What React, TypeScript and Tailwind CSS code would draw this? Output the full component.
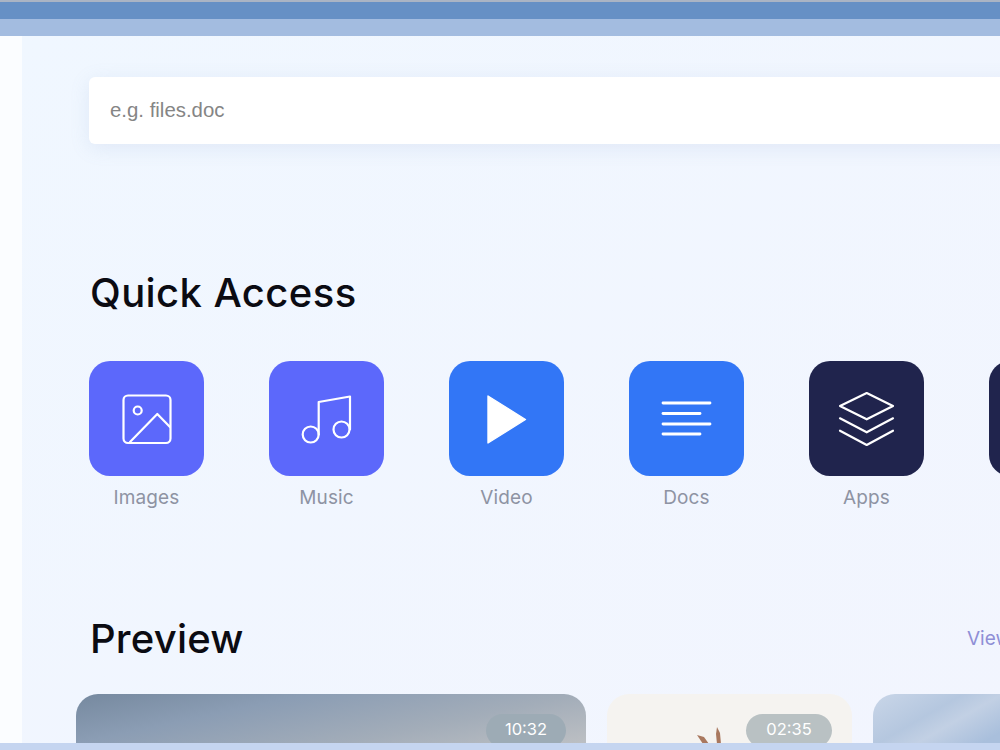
const tileIcons = {
  image: (
    <g fill="none" stroke="white" strokeWidth="2.2" strokeLinecap="round" strokeLinejoin="round">
      <rect x="34.5" y="34.5" width="47" height="47.5" rx="4.5" />
      <circle cx="48.7" cy="49.5" r="4" />
      <path d="M41 81 L68.3 53 L81 66" />
    </g>
  ),
  music: (
    <g fill="none" stroke="white" strokeWidth="2.2" strokeLinecap="round" strokeLinejoin="round">
      <circle cx="41.7" cy="73.5" r="8" />
      <circle cx="72.5" cy="68.5" r="8" />
      <path d="M49.7 73.5 V41 L81 35.5 V68.5" />
    </g>
  ),
  video: <path d="M39 35 L76.5 58.5 L39 82 Z" fill="white" stroke="white" strokeWidth="1.4" strokeLinejoin="round" />,
  docs: (
    <g stroke="white" strokeWidth="2.8" strokeLinecap="round">
      <path d="M34 42 H81" />
      <path d="M34 52.5 H71" />
      <path d="M34 63 H81" />
      <path d="M34 73 H71" />
    </g>
  ),
  apps: (
    <g fill="none" stroke="white" strokeWidth="2.2" strokeLinecap="round" strokeLinejoin="round">
      <path d="M57.7 32 L84 45 L57.7 58.3 L31 45 Z" />
      <path d="M31 57.3 L57.7 71.3 L84 57.3" />
      <path d="M31 69.7 L57.7 84 L84 69.7" />
    </g>
  ),
}

const TILES = [
  { label: 'Images', icon: tileIcons.image, color: 'bg-[#5c68fb]' },
  { label: 'Music', icon: tileIcons.music, color: 'bg-[#5c68fb]' },
  { label: 'Video', icon: tileIcons.video, color: 'bg-[#3276f6]' },
  { label: 'Docs', icon: tileIcons.docs, color: 'bg-[#3276f6]' },
  { label: 'Apps', icon: tileIcons.apps, color: 'bg-[#20244d]' },
  { label: '', icon: null, color: 'bg-[#20244d]' },
]

function Tile({ label, icon, color }: { label: string; icon: React.ReactNode; color: string }) {
  return (
    <div className="w-[115px] shrink-0 flex flex-col items-center">
      <div className={`w-[115px] h-[115px] rounded-[21px] ${color}`}>
        <svg width="115" height="115" viewBox="0 0 115 115">{icon}</svg>
      </div>
      <span className="mt-[9px] text-[19px] leading-[26px] tracking-[0.1px] text-[#8e93a3]">{label}</span>
    </div>
  )
}

function Duration({ text, className }: { text: string; className: string }) {
  return (
    <span className={`absolute top-[20px] right-[20px] h-[33px] text-center rounded-full text-[16.5px] leading-[31px] text-white ${className}`}>
      {text}
    </span>
  )
}

export default function App() {
  return (
    <div className="w-[1000px] h-[750px] overflow-hidden flex flex-col font-['Inter',sans-serif]">
      <div className="h-[2px] shrink-0 bg-[#aab4c4]" />
      <div className="h-[17px] shrink-0 bg-[#6690c5]" />
      <div className="h-[17px] shrink-0 bg-[#a3bce0]" />

      <div className="flex-1 min-h-0 flex">
        <div className="w-[22px] shrink-0 bg-[#fbfdff]" />
        <main className="flex-1 min-w-0 overflow-hidden pt-[41px] pl-[67px] bg-gradient-to-br from-[#f0f7ff] to-[#f2f5fe]">
          <div className="w-[1000px] h-[67px] flex items-center pl-[21px] bg-white rounded-[6px] shadow-[0_4px_20px_rgba(120,150,200,0.14)] font-['Liberation_Sans',sans-serif] text-[20.4px] text-[#858585]">
            e.g. files.doc
          </div>

          <h2 className="mt-[124px] ml-px text-[40px] leading-[50px] font-medium tracking-[0.4px] text-[#0b0b12]">Quick Access</h2>

          <div className="mt-[43px] flex gap-[65px]">
            {TILES.map((t, i) => (
              <Tile key={i} label={t.label} icon={t.icon} color={t.color} />
            ))}
          </div>

          <div className="mt-[103px] w-[911px] flex items-center justify-between">
            <h2 className="ml-px text-[40px] leading-[50px] font-medium tracking-[0.2px] text-[#0b0b12]">Preview</h2>
            <span className="mt-px w-[33px] whitespace-nowrap text-[19px] text-[#8f8fd6]">View all</span>
          </div>

          <div className="mt-[30px] -ml-[13px] flex gap-[21px]">
            <div className="relative w-[510px] h-[200px] shrink-0 rounded-t-[22px] bg-[linear-gradient(168deg,#76899f_0%,#8b9db4_16%,#a3adb9_35%,#bcbfc3_51%)]">
              <Duration text="10:32" className="w-[80px] bg-[#9dabb5]" />
            </div>
            <div className="relative w-[245px] h-[200px] shrink-0 rounded-t-[22px] bg-[#f5f3f0]">
              <Duration text="02:35" className="w-[86px] bg-[#b9c1c3]" />
              <svg className="absolute left-[90px] top-[33px]" width="26" height="17" viewBox="0 0 26 17">
                <path d="M0 8 L7 10 L12 17 L6 17 Z" fill="#a9785f" />
                <path d="M20 0 L23 6 L24 17 L20 17 L19 7 Z" fill="#a9785f" />
              </svg>
            </div>
            <div className="w-[300px] h-[200px] shrink-0 rounded-t-[22px] bg-[linear-gradient(150deg,#c9d6e8_0%,#b5c7df_14%,#c2d0e4_20%,#a9bfdc_30%)]" />
          </div>
        </main>
      </div>

      <div className="h-[7px] shrink-0 bg-[#c5d5f0]" />
    </div>
  )
}
